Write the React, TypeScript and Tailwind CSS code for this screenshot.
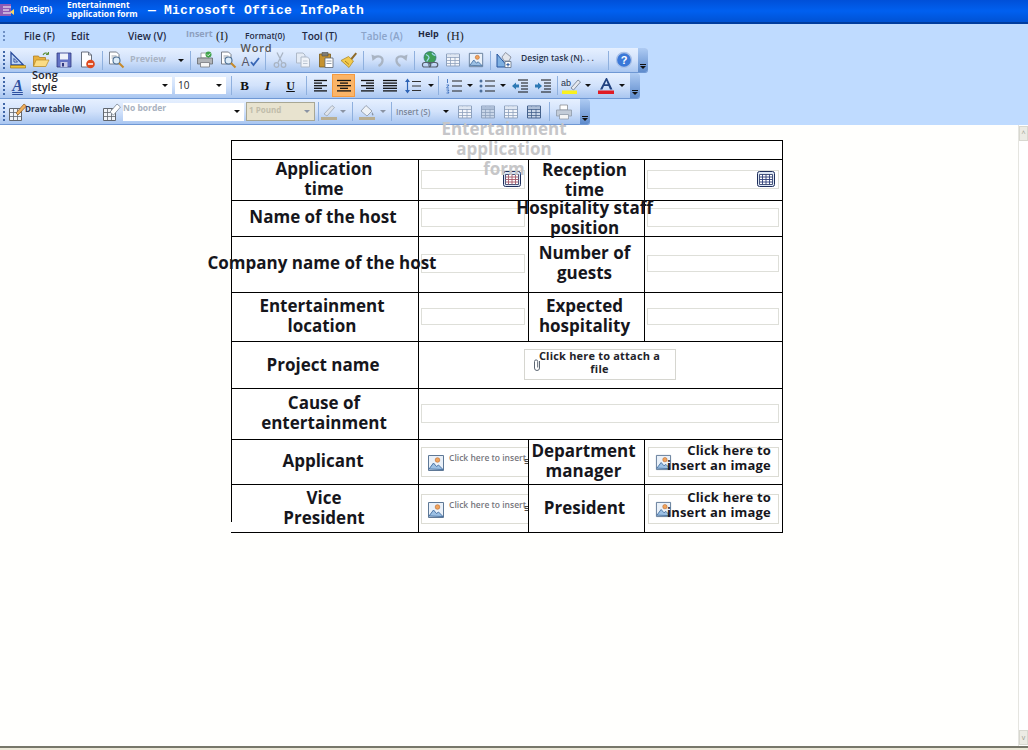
import React from "react";

const S = ({ children }: { children: React.ReactNode }) => (
  <svg width="18" height="18" viewBox="0 0 18 18" fill="none">{children}</svg>
);

const Design = () => (
  <S>
    <path d="M2 1.500V14h12.500z" fill="#bcd4f4" stroke="#2a4c9c" strokeWidth="1.300" />
    <path d="M5 7.500V11h3.500z" fill="#fff" stroke="#2a4c9c" />
    <path d="M1.500 14.500h15v2.500h-15z" fill="#f2c438" stroke="#a27a16" strokeWidth=".7" />
  </S>
);
const Open = () => (
  <S>
    <path d="M1.500 5h5l1 1.500h6V15h-12z" fill="#e8b13e" stroke="#a9761a" strokeWidth=".7" />
    <path d="M4 9h13l-3.200 6.500H1.500z" fill="#fbdc84" stroke="#b98a22" strokeWidth=".7" />
    <path d="M11 4c1-2 3-2.500 5-1.500" stroke="#5d8f3a" strokeWidth="1.100" />
    <path d="M16.500 1v2.500H14" stroke="#5d8f3a" strokeWidth="1" />
  </S>
);
const Save = () => (
  <S>
    <path d="M2 2h14v14H2z" fill="#6272c4" stroke="#30387f" strokeWidth=".8" />
    <path d="M5 2.500h8v6H5z" fill="#eef2fb" />
    <path d="M5.500 11h7v5h-7z" fill="#c7cbe8" />
    <path d="M7 12h2v3.500H7z" fill="#30387f" />
  </S>
);
const NoDoc = () => (
  <S>
    <path d="M3.500 1h7l3 3v12h-10z" fill="#fff" stroke="#59616f" strokeWidth=".9" />
    <path d="M10.500 1v3h3" stroke="#59616f" strokeWidth=".8" />
    <circle cx="12.500" cy="13" r="4.300" fill="#de4a1f" />
    <path d="M10 13h5" stroke="#fff" strokeWidth="1.500" />
  </S>
);
const Preview = () => (
  <S>
    <path d="M2.500 1h7l2.500 2.500V13H2.500z" fill="#fff" stroke="#6d7480" strokeWidth=".9" />
    <path d="M4.500 5h5M4.500 7h3" stroke="#9aa3ad" />
    <circle cx="9.500" cy="9.500" r="3.500" fill="#dcecf9" stroke="#4c6f94" strokeWidth="1.100" />
    <path d="M12 12l4.500 4.500" stroke="#c68a2a" strokeWidth="2" />
  </S>
);
const Print = ({ gray }: { gray?: boolean }) => (
  <S>
    <path d="M5 2h7.500v5H5z" fill="#fff" stroke="#8a8d92" strokeWidth=".8" />
    <path d="M1.500 7h15v6h-15z" fill={gray ? "#c3ccd8" : "#b1b4b8"} stroke={gray ? "#8f9aaa" : "#66696e"} strokeWidth=".8" />
    <path d="M4.500 11.500h9V16h-9z" fill="#f5f5f5" stroke={gray ? "#8f9aaa" : "#77797d"} strokeWidth=".8" />
    {gray ? null : (
      <>
        <circle cx="12.500" cy="3.500" r="3" fill="#3fa34a" />
        <path d="M11 3.500l1.200 1.200 2-2.200" stroke="#fff" strokeWidth=".9" />
      </>
    )}
  </S>
);
const Cut = () => (
  <S>
    <path d="M6 1.500l5 10M12 1.500L7 11.500" stroke="#a9b4c3" strokeWidth="1.300" />
    <circle cx="5.500" cy="14" r="2.300" stroke="#a9b4c3" strokeWidth="1.300" />
    <circle cx="12.500" cy="14" r="2.300" stroke="#a9b4c3" strokeWidth="1.300" />
  </S>
);
const Copy = () => (
  <S>
    <path d="M2.500 2h6.500l2 2v8H2.500z" fill="#e4ebf5" stroke="#aeb9c8" />
    <path d="M7 6h6.500l2 2v8H7z" fill="#eff3f9" stroke="#aeb9c8" />
    <path d="M9 10h4.500M9 12.500h4.500" stroke="#bcc6d3" />
  </S>
);
const Paste = () => (
  <S>
    <path d="M2.500 3h11v13h-11z" fill="#c5922f" stroke="#7b5a18" strokeWidth=".8" />
    <path d="M5 1.500h6V5H5z" fill="#7f7d76" stroke="#4f4d47" strokeWidth=".6" />
    <path d="M8 7h8v9.500H8z" fill="#fff" stroke="#5b6675" strokeWidth=".8" />
    <path d="M9.500 10h5M9.500 12.500h5" stroke="#97a1ad" />
  </S>
);
const Brush = () => (
  <S>
    <path d="M10 8l5.500-6.500 1.500 1.300L11.500 9.500z" fill="#8e6b2c" />
    <path d="M8.500 5.500l5 4.500L9 16.500 1 9.500z" fill="#f2c94c" stroke="#a8821f" strokeWidth=".7" />
    <path d="M5 10l4 3.500" stroke="#a8821f" />
  </S>
);
const Undo = ({ flip }: { flip?: boolean }) => (
  <S>
    <g transform={flip ? "matrix(-1 0 0 1 18 0)" : undefined}>
      <path d="M5 6.500c5-2.500 9-.5 8.500 3.500-.3 2.500-2 4-4 5" stroke="#a9b4c3" strokeWidth="2.200" />
      <path d="M2.500 3.500L3.500 10l5-4z" fill="#a9b4c3" />
    </g>
  </S>
);
const Globe = () => (
  <S>
    <circle cx="9" cy="6.500" r="6" fill="#3f9f57" stroke="#2c6f7a" strokeWidth=".7" />
    <path d="M5 3.500c2 1 3 1.500 3 3s-2 2-2 4M11 2c1 2 2 2 3.500 2.500" stroke="#9fd8ef" strokeWidth="1.300" />
    <path d="M1.500 13.500a2 2 0 0 1 2-2h4a2 2 0 0 1 0 4.500h-4a2 2 0 0 1-2-2.500z" stroke="#56606e" strokeWidth="1.200" />
    <path d="M8 13.500a2 2 0 0 1 2-2h4.500a2 2 0 0 1 0 4.500H10a2 2 0 0 1-2-2.500z" stroke="#56606e" strokeWidth="1.200" />
  </S>
);
const GridIcon = ({ dark, color = "#8ea1bd" }: { dark?: boolean; color?: string }) => (
  <S>
    <path d="M2.500 3h13v12h-13z" fill={dark ? "#c9d6e8" : "#f3f6fb"} stroke={color} />
    <path d="M2.500 6.500h13M2.500 9.500h13M2.500 12.500h13M6.500 3v12M11 3v12" stroke={color} strokeWidth=".8" />
    <path d="M3 3.500h12v2.500H3z" fill={dark ? "#aebfd8" : "#dfe7f3"} />
  </S>
);
const ImageIcon = ({ size = 18 }: { size?: number }) => (
  <svg width={size} height={size} viewBox="0 0 18 18" fill="none">
    <path d="M1.500 1.500h15v15h-15z" fill="#eaf1f9" stroke="#5e7896" />
    <circle cx="10.500" cy="6" r="2.300" fill="#f0a35c" stroke="#b9652a" strokeWidth=".6" />
    <path d="M2 15l4.500-6 3 3.500 2-1.500L16 15.500z" fill="#9cc0e4" stroke="#3f6a9c" strokeWidth=".9" />
  </svg>
);
const DesignTask = () => (
  <S>
    <path d="M2 3v13h11z" fill="#7eb0e2" stroke="#27559d" />
    <path d="M7 6l3.500-4.500L16 6l-2 4H9z" fill="#e3e6ec" stroke="#7b8390" strokeWidth=".8" />
    <path d="M10 10.500h6v6h-6z" fill="#fff" stroke="#5f6e84" strokeWidth=".8" />
    <path d="M13 12v3.500M11.300 13.700h3.400" stroke="#27559d" />
  </S>
);
const Help = () => (
  <svg width="18" height="18" viewBox="0 0 18 18" fill="none">
    <circle cx="9" cy="9" r="7.500" fill="#3b78d8" stroke="#a9c1e8" strokeWidth="1.300" />
    <text x="9" y="13" textAnchor="middle" fontSize="11" fontWeight="700" fill="#fff" fontFamily="Liberation Sans">?</text>
  </svg>
);
const Lines = ({ kind }: { kind: "l" | "c" | "r" | "j" }) => {
  const rows: [number, number][] =
    kind === "l"
      ? [[2, 15], [2, 10], [2, 15], [2, 10], [2, 15]]
      : kind === "c"
        ? [[2, 16], [5, 13], [2, 16], [5, 13], [2, 16]]
        : kind === "r"
          ? [[3, 16], [8, 16], [3, 16], [8, 16], [3, 16]]
          : [[2, 16], [2, 16], [2, 16], [2, 16], [2, 16]];
  return (
    <S>
      {rows.map(([a, b], i) => (
        <path key={i} d={`M${a} ${3.5 + i * 2.6}H${b}`} stroke="#111" strokeWidth="1.300" />
      ))}
    </S>
  );
};
const LineSpacing = () => (
  <S>
    <path d="M3.500 3v12" stroke="#2d63b5" strokeWidth="1.200" />
    <path d="M1 5l2.500-3.500L6 5zM1 13l2.500 3.500L6 13z" fill="#2d63b5" />
    <path d="M8 4.500h9M8 9h9M8 13.500h9" stroke="#333" strokeWidth="1.100" />
  </S>
);
const ListIcon = ({ num }: { num?: boolean }) => (
  <S>
    {num ? (
      <path d="M2.500 2v4M1.500 8h2.500L1.500 11h2.500M1.500 13h2.500l-1 1.500 1 1.500H1.500" stroke="#2d63b5" strokeWidth=".8" />
    ) : (
      <>
        <circle cx="3" cy="4" r="1.500" fill="#4c6f9c" />
        <circle cx="3" cy="9" r="1.500" fill="#4c6f9c" />
        <circle cx="3" cy="14" r="1.500" fill="#4c6f9c" />
      </>
    )}
    <path d="M7 4h10M7 9h10M7 14h10" stroke="#222" strokeWidth="1.100" />
  </S>
);
const Indent = ({ out }: { out?: boolean }) => (
  <S>
    <path d="M7 3h10M10 6h7M10 9h7M10 12h7M7 15h10" stroke="#111" strokeWidth="1.100" />
    {out ? (
      <path d="M1 9l4-3.500V7.500h3v3H5v2z" fill="#2d79b5" />
    ) : (
      <path d="M8 9L4 5.500V7.500H1v3h3v2z" fill="#2d79b5" />
    )}
  </S>
);
const Highlight = () => (
  <svg width="20" height="18" viewBox="0 0 20 18" fill="none">
    <text x="0" y="9" fontSize="9" fontFamily="Liberation Sans" fill="#26304a">ab</text>
    <path d="M10 11L17 3l2.500 2-7 8z" fill="#e6e9ef" stroke="#6d7888" strokeWidth=".8" />
    <path d="M1 13.500h15V17H1z" fill="#f9f01e" />
  </svg>
);
const FontColor = () => (
  <svg width="18" height="18" viewBox="0 0 18 18" fill="none">
    <path d="M3 12.500L9 1h1l5.500 11.500h-2.500L11.500 9h-4.500l-1.600 3.500zM7.800 7.200h3L9.300 3.800z" fill="#21417f" />
    <path d="M1 13.500h16V17H1z" fill="#e01b24" />
  </svg>
);
const DrawTable = () => (
  <svg width="20" height="20" viewBox="0 0 20 20" fill="none">
    <path d="M1.500 6.500h12v12h-12z" fill="#f1f4f9" stroke="#62676e" />
    <path d="M1.500 10.500h12M1.500 14.500h12M5.500 6.500v12M9.500 6.500v12" stroke="#62676e" strokeWidth=".8" />
    <path d="M8 11l8-9 2.500 2L10 13z" fill="#f0b05a" stroke="#8d5a20" strokeWidth=".7" />
  </svg>
);
const Eraser = () => (
  <svg width="20" height="20" viewBox="0 0 20 20" fill="none">
    <path d="M1.500 6.500h12v12h-12z" fill="#f1f4f9" stroke="#62676e" />
    <path d="M1.500 10.500h12M1.500 14.500h12M5.500 6.500v12M9.500 6.500v12" stroke="#62676e" strokeWidth=".8" />
    <path d="M8 10l7-8 3.500 3-7 8z" fill="#fff" stroke="#7b8694" strokeWidth=".8" />
  </svg>
);
const Pencil = () => (
  <S>
    <path d="M4 11l8-8.500 2.500 2L7 13z" fill="#dfe4ec" stroke="#9aa4b1" strokeWidth=".8" />
    <path d="M1 14h16v3H1z" fill="#b9ae92" />
  </S>
);
const Fill = () => (
  <S>
    <path d="M3 8l5-5.500L14 8l-5 5z" fill="#eef2f7" stroke="#8a94a3" strokeWidth=".8" />
    <path d="M14 9c1.500 2 2 3 1 3.500-1 .2-1.500-1-1-3.500z" fill="#8a94a3" />
    <path d="M1 14h16v3H1z" fill="#b9ae92" />
  </S>
);
const Clip = () => (
  <svg width="10" height="14" viewBox="0 0 10 14" fill="none">
    <path d="M7.500 3v7a2.500 2.500 0 0 1-5 0V3.500a1.600 1.600 0 0 1 3.200 0V9.500" stroke="#5c6672" strokeWidth="1" />
  </svg>
);
const Calendar = ({ red }: { red?: boolean }) => (
  <svg width="18" height="18" viewBox="0 0 18 18" fill="none">
    <rect x=".5" y="1.500" width="17" height="15" rx="2" fill="#dce6f4" stroke="#1f2f5c" />
    <path d="M2.500 4.500h13v10h-13z" fill="#fff" stroke="#1f2f5c" strokeWidth=".8" />
    <path d="M2.500 7h13M2.500 9.500h13M2.500 12h13M5.500 4.500v10M9 4.500v10M12.500 4.500v10" stroke={red ? "#a55a6a" : "#2f3f78"} strokeWidth=".9" />
  </svg>
);
const Arrow = ({ gray }: { gray?: boolean }) => (
  <span
    className={
      gray
        ? "block w-0 h-0 border-l-[3px] border-r-[3px] border-t-[3px] border-l-transparent border-r-transparent border-t-[#8a93a3]"
        : "block w-0 h-0 border-l-[3px] border-r-[3px] border-t-[3px] border-l-transparent border-r-transparent border-t-[#111]"
    }
  />
);
const Grip = () => (
  <span className="flex flex-col gap-[2px] ml-[3px] w-[2px] shrink-0">
    <i className="block w-[2px] h-[2px] bg-[#3f66a8]" />
    <i className="block w-[2px] h-[2px] bg-[#3f66a8]" />
    <i className="block w-[2px] h-[2px] bg-[#3f66a8]" />
    <i className="block w-[2px] h-[2px] bg-[#3f66a8]" />
    <i className="block w-[2px] h-[2px] bg-[#3f66a8]" />
  </span>
);
const B = ({ children }: { children: React.ReactNode }) => (
  <span className="w-[23px] h-full flex items-center justify-center shrink-0">{children}</span>
);
const Sep = () => <span className="w-px h-[19px] bg-[#8fb0de] shrink-0" />;
const Chevron = () => (
  <span className="ml-auto w-[10px] h-full bg-linear-to-b from-[#aecbf3] to-[#5f8ccc] rounded-r-[3px] flex flex-col items-center justify-end pb-[3px] gap-[1px] shrink-0">
    <i className="block w-[6px] h-px bg-[#111]" />
    <Arrow />
  </span>
);
const Bar = ({ w, children }: { w: string; children: React.ReactNode }) => (
  <div className={`${w} flex items-center bg-linear-to-b from-[#e6f0ff] via-[#d2e2fb] to-[#a9c6f0] border-b border-[#6f98d4] rounded-r-[3px]`}>
    {children}
  </div>
);

const Cell = ({ children, cls = "" }: { children?: React.ReactNode; cls?: string }) => (
  <div className={`relative border-t border-l border-black flex items-center justify-center min-w-0 ${cls}`}>{children}</div>
);
const Label = ({ children, cls = "" }: { children: React.ReactNode; cls?: string }) => (
  <span className={`relative z-10 text-[17px] leading-[20px] font-bold text-[#16161c] text-center whitespace-nowrap ${cls}`}>{children}</span>
);
const Field = ({ cls = "h-[19px]" }: { cls?: string }) => (
  <div className={`w-full ml-[2px] mr-[3px] mb-[2px] border border-[#dedfd9] bg-white ${cls}`} />
);
const InsertSmall = ({ top = "top-[7px]" }: { top?: string }) => (
  <div className={`absolute left-[2px] ${top} h-[30px] w-[120px] border border-[#dcdcd4] flex items-start overflow-hidden bg-white`}>
    <span className="mt-[6px] ml-[5px] shrink-0"><ImageIcon size={18} /></span>
    <span className="ml-[4px] mt-[4px] text-[8.500px] leading-[12px] font-semibold text-[#77777d] whitespace-nowrap">Click here to insert</span>
    <span className="absolute left-[102px] top-[7px] text-[11px] leading-[12px] text-[#222]">≡</span>
  </div>
);
const InsertLarge = () => (
  <div className="relative w-full ml-[3px] mr-[3px] h-[30px] border border-[#dcdcd4] bg-white">
    <span className="absolute left-[6px] top-[6px]"><ImageIcon size={17} /></span>
    <span className="absolute right-[7px] top-[-5px] text-[13px] tracking-[0.2px] leading-[15px] font-bold text-right text-[#16161c] whitespace-nowrap">
      Click here to
      <br />
      insert an image
    </span>
  </div>
);

export default function App() {
  return (
    <div className="w-[1028px] h-[750px] overflow-hidden flex flex-col bg-white font-['Open_Sans',sans-serif]">
      <header className="h-[24px] shrink-0 flex items-center bg-linear-to-b from-[#0050d8] via-[#0060f0] to-[#0052d4] border-b-2 border-[#003c9e] text-white">
        <svg width="14" height="14" viewBox="0 0 14 14" className="shrink-0 mb-[2px]">
          <path d="M0 1h11v12H0z" fill="#8e5bb5" />
          <path d="M3 4h8M3 7h6M3 10h8" stroke="#fff" strokeWidth="1.200" />
          <path d="M10 9l4-3v6z" fill="#f4d36a" />
        </svg>
        <span className="ml-[6px] w-[47px] text-[8px] font-bold leading-[10px] mb-[4px]">(Design)</span>
        <span className="text-[8.500px] font-bold leading-[9px] w-[81px] mb-[4px]">
          Entertainment
          <br />
          application form
        </span>
        <span className="font-['Liberation_Mono',monospace] font-bold text-[13px] tracking-[0.2px] mb-[1px] whitespace-pre">— Microsoft Office InfoPath</span>
      </header>

      <div className="h-[101px] shrink-0 bg-[#bfdbff] flex flex-col">
        <nav className="h-[24px] shrink-0 relative flex items-center text-[10px] font-semibold text-[#1f2a44]">
          <span className="ml-[3px] flex flex-col gap-[2px]">
            <i className="block w-[2px] h-[2px] bg-[#6f90c4]" />
            <i className="block w-[2px] h-[2px] bg-[#6f90c4]" />
            <i className="block w-[2px] h-[2px] bg-[#6f90c4]" />
          </span>
          <span className="ml-[19px] w-[47px]">File (F)</span>
          <span className="w-[57px]">Edit</span>
          <span className="w-[58px]">View (V)</span>
          <span className="w-[30px] text-[9px] font-bold text-[#8da0c0] mb-[5px]">Insert</span>
          <span className="w-[29px] font-['Liberation_Serif',serif] font-normal text-[12px] text-[#222]">(I)</span>
          <span className="w-[57px] text-[8.500px]">Format(0)</span>
          <span className="w-[59px]">Tool (T)</span>
          <span className="w-[57px] text-[#8ba4ca]">Table (A)</span>
          <span className="w-[29px] text-[9px] font-bold mb-[5px]">Help</span>
          <span className="font-['Liberation_Serif',serif] font-normal text-[12px] text-[#222]">(H)</span>
        </nav>

        <Bar w="w-[648px] h-[25px]">
          <Grip />
          <span className="ml-[1px]" />
          <B><Design /></B>
          <B><Open /></B>
          <B><Save /></B>
          <B><NoDoc /></B>
          <span className="ml-[4px]" />
          <Sep />
          <span className="ml-[1px]" />
          <B><Preview /></B>
          <span className="w-[45px] pl-[3px] mb-[3px] text-[9px] font-bold text-[#a8b3c4]">Preview</span>
          <span className="w-[18px] flex justify-center"><Arrow /></span>
          <Sep />
          <span className="ml-[2px]" />
          <B><Print /></B>
          <B><Preview /></B>
          <B>
            <span className="relative flex items-center">
              <span className="absolute top-[-8px] left-[-1px] text-[11px] font-semibold text-[#555] tracking-[0.8px] leading-[14px]">Word</span>
              <span className="text-[12px] text-[#556] font-['Liberation_Sans',sans-serif] mt-[4px]">A</span>
              <svg width="10" height="10" viewBox="0 0 10 10" fill="none" className="mt-[4px]"><path d="M1 5l2.500 3L9 1" stroke="#3866b5" strokeWidth="1.800" /></svg>
            </span>
          </B>
          <span className="ml-[3px]" />
          <Sep />
          <span className="ml-[2px]" />
          <B><Cut /></B>
          <B><Copy /></B>
          <B><Paste /></B>
          <B><Brush /></B>
          <span className="ml-[3px]" />
          <Sep />
          <span className="ml-[2px]" />
          <B><Undo /></B>
          <B><Undo flip /></B>
          <span className="ml-[2px]" />
          <Sep />
          <span className="ml-[3px]" />
          <B><Globe /></B>
          <B><GridIcon /></B>
          <B><ImageIcon size={16} /></B>
          <span className="ml-[3px]" />
          <Sep />
          <span className="ml-[1px]" />
          <B><DesignTask /></B>
          <span className="ml-[6px] w-[87px] mb-[3px] text-[8.500px] font-semibold text-[#27324a] whitespace-nowrap">Design task (N). . .</span>
          <Sep />
          <span className="ml-[3px]" />
          <B><Help /></B>
          <Chevron />
        </Bar>

        <Bar w="w-[640px] h-[26px]">
          <Grip />
          <span className="ml-[1px]" />
          <B><span className="font-['Liberation_Serif',serif] italic font-bold text-[16px] underline decoration-double text-[#2d4f9e]">A</span></B>
          <span className="ml-[2px] w-[141px] h-[17px] bg-white relative flex items-center">
            <span className="absolute left-[1px] top-[-8px] text-[11px] leading-[12px] font-semibold text-[#26262c]">
              Song
              <br />
              style
            </span>
            <span className="ml-auto mr-[4px]"><Arrow /></span>
          </span>
          <span className="ml-[3px] w-[51px] h-[17px] bg-white flex items-center pl-[3px] text-[10px] text-[#26262c]">
            10
            <span className="ml-auto mr-[4px]"><Arrow /></span>
          </span>
          <span className="ml-[5px]" />
          <Sep />
          <span className="ml-[1px]" />
          <B><span className="font-['Liberation_Serif',serif] font-bold text-[13px] text-[#111]">B</span></B>
          <B><span className="font-['Liberation_Serif',serif] italic font-bold text-[13px] text-[#111]">I</span></B>
          <B><span className="font-['Liberation_Serif',serif] underline font-bold text-[12px] text-[#111]">U</span></B>
          <span className="ml-[4px]" />
          <Sep />
          <span className="ml-[2px]" />
          <B><Lines kind="l" /></B>
          <span className="w-[23px] h-[23px] bg-[#fbb467] border border-[#f59a3e] flex items-center justify-center shrink-0"><Lines kind="c" /></span>
          <B><Lines kind="r" /></B>
          <B><Lines kind="j" /></B>
          <B><LineSpacing /></B>
          <span className="w-[14px] flex justify-center"><Arrow /></span>
          <Sep />
          <span className="ml-[3px]" />
          <B><ListIcon num /></B>
          <span className="w-[10px] flex justify-center"><Arrow /></span>
          <B><ListIcon /></B>
          <span className="w-[10px] flex justify-center"><Arrow /></span>
          <B><Indent out /></B>
          <B><Indent /></B>
          <span className="ml-[3px]" />
          <Sep />
          <span className="ml-[1px]" />
          <B><Highlight /></B>
          <span className="w-[11px] flex justify-center"><Arrow /></span>
          <span className="ml-[1px]" />
          <B><FontColor /></B>
          <span className="w-[9px] flex justify-center"><Arrow /></span>
          <Chevron />
        </Bar>

        <Bar w="w-[590px] h-[26px]">
          <Grip />
          <span className="ml-[3px] w-[20px] shrink-0"><DrawTable /></span>
          <span className="ml-[-3px] w-[77px] text-[8.200px] font-bold text-[#2b3550] whitespace-nowrap mb-[4px]">Draw table (W)</span>
          <span className="w-[20px] shrink-0"><Eraser /></span>
          <span className="ml-[1px] w-[121px] h-[18px] bg-white flex items-center text-[8.500px] font-bold text-[#a9b2c0]">
            <span className="mb-[6px]">No border</span>
            <span className="ml-auto mr-[4px]"><Arrow /></span>
          </span>
          <span className="ml-[2px] w-[69px] h-[19px] bg-[#e8e3cf] border border-[#a8a794] flex items-center pl-[2px] text-[8px] font-bold text-[#c1bdab]">
            <span className="mb-[3px]">1 Pound</span>
            <span className="ml-auto mr-[4px]"><Arrow gray /></span>
          </span>
          <span className="ml-[3px]" />
          <Sep />
          <span className="ml-[-2px]" />
          <B><Pencil /></B>
          <span className="ml-[-2px] w-[10px] flex justify-center"><Arrow gray /></span>
          <span className="ml-[4px]" />
          <Sep />
          <span className="ml-[2px]" />
          <B><Fill /></B>
          <span className="w-[10px] flex justify-center"><Arrow gray /></span>
          <span className="ml-[3px]" />
          <Sep />
          <span className="ml-[4px] w-[44px] text-[8px] font-semibold text-[#7a8699] whitespace-nowrap">Insert (S)</span>
          <span className="w-[12px] flex justify-center"><Arrow /></span>
          <span className="ml-[1px]" />
          <B><GridIcon /></B>
          <B><GridIcon dark /></B>
          <B><GridIcon /></B>
          <B><GridIcon dark color="#44618c" /></B>
          <span className="ml-[4px]" />
          <Sep />
          <span className="ml-[2px]" />
          <B><Print gray /></B>
          <Chevron />
        </Bar>
      </div>

      <div className="flex-1 min-h-0 flex">
        <main className="flex-1 pl-[231px] pt-[15px] bg-[#fffffd]">
          <div className="relative w-[552px]">
            <div className="grid grid-cols-[187px_110px_116px_138px] grid-rows-[19px_41px_36px_56px_49px_47px_51px_45px_48px] border-r border-b border-black bg-white">
              <Cell cls="col-span-4" />

              <Cell><Label cls="right-[1px] top-[-1px]">Application<br />time</Label></Cell>
              <Cell>
                <Field />
                <span className="absolute right-[7px] top-[10px]"><Calendar red /></span>
              </Cell>
              <Cell><Label cls="right-[2px]">Reception<br />time</Label></Cell>
              <Cell>
                <Field />
                <span className="absolute right-[7px] top-[10px]"><Calendar /></span>
              </Cell>

              <Cell><Label cls="right-[2px] top-[-2px]">Name of the host</Label></Cell>
              <Cell><Field /></Cell>
              <Cell><Label cls="right-[2px] top-[-1px]">Hospitality staff<br />position</Label></Cell>
              <Cell><Field /></Cell>

              <Cell><Label cls="right-[3px] top-[-2px]">Company name of the host</Label></Cell>
              <Cell><Field /></Cell>
              <Cell><Label cls="right-[2px] top-[-2px]">Number of<br />guests</Label></Cell>
              <Cell><Field cls="h-[17px]" /></Cell>

              <Cell><Label cls="right-[3px] top-[-1px]">Entertainment<br />location</Label></Cell>
              <Cell><Field cls="h-[17px]" /></Cell>
              <Cell><Label cls="right-[2px] top-[-1px]">Expected<br />hospitality</Label></Cell>
              <Cell><Field cls="h-[17px]" /></Cell>

              <Cell><Label cls="right-[2px]">Project name</Label></Cell>
              <Cell cls="col-span-3">
                <div className="relative w-[152px] h-[31px] right-[1px] bottom-[1px] border border-[#d6d6d0] bg-white flex justify-center">
                  <span className="absolute left-[7px] top-[8px]"><Clip /></span>
                  <span className="text-[11px] leading-[13px] font-bold text-center text-[#23232a] tracking-[0.2px] mt-[-1px]">Click here to attach a<br />file</span>
                </div>
              </Cell>

              <Cell><Label cls="right-[1px] top-[-1px]">Cause of<br />entertainment</Label></Cell>
              <Cell cls="col-span-3"><Field /></Cell>

              <Cell><Label cls="right-[2px] top-[-1px]">Applicant</Label></Cell>
              <Cell cls="overflow-hidden"><InsertSmall /></Cell>
              <Cell><Label cls="right-[3px] top-[-1px]">Department<br />manager</Label></Cell>
              <Cell><InsertLarge /></Cell>

              <Cell><Label cls="right-[1px] top-[-1px]">Vice<br />President</Label></Cell>
              <Cell cls="overflow-hidden"><InsertSmall top="top-[9px]" /></Cell>
              <Cell><Label cls="right-[2px] top-[-1px]">President</Label></Cell>
              <Cell><InsertLarge /></Cell>
            </div>
            <span className="absolute left-0 top-[382px] w-px h-[10px] bg-white" />
            <span className="absolute left-[203px] top-[-21px] w-[140px] z-20 text-[17px] leading-[20px] font-bold text-[#c6c6c8] text-center">
              Entertainment application form
            </span>
          </div>
        </main>
        <aside className="w-[10px] shrink-0 border-l border-[#e5e5e0] bg-white flex flex-col justify-between pb-[1px]">
          <span className="mt-[1px] h-[15px] bg-[#ecebe4] border border-[#d8d8d0] flex items-center justify-center text-[7px] text-[#9a9a90] leading-none">^</span>
          <span className="h-[15px] bg-[#ecebe4] border border-[#d8d8d0] flex items-center justify-center text-[7px] text-[#9a9a90] leading-none">v</span>
        </aside>
      </div>
      <div className="h-[4px] shrink-0 bg-[#ece9d8] border-t-2 border-[#77776a]" />
    </div>
  );
}
